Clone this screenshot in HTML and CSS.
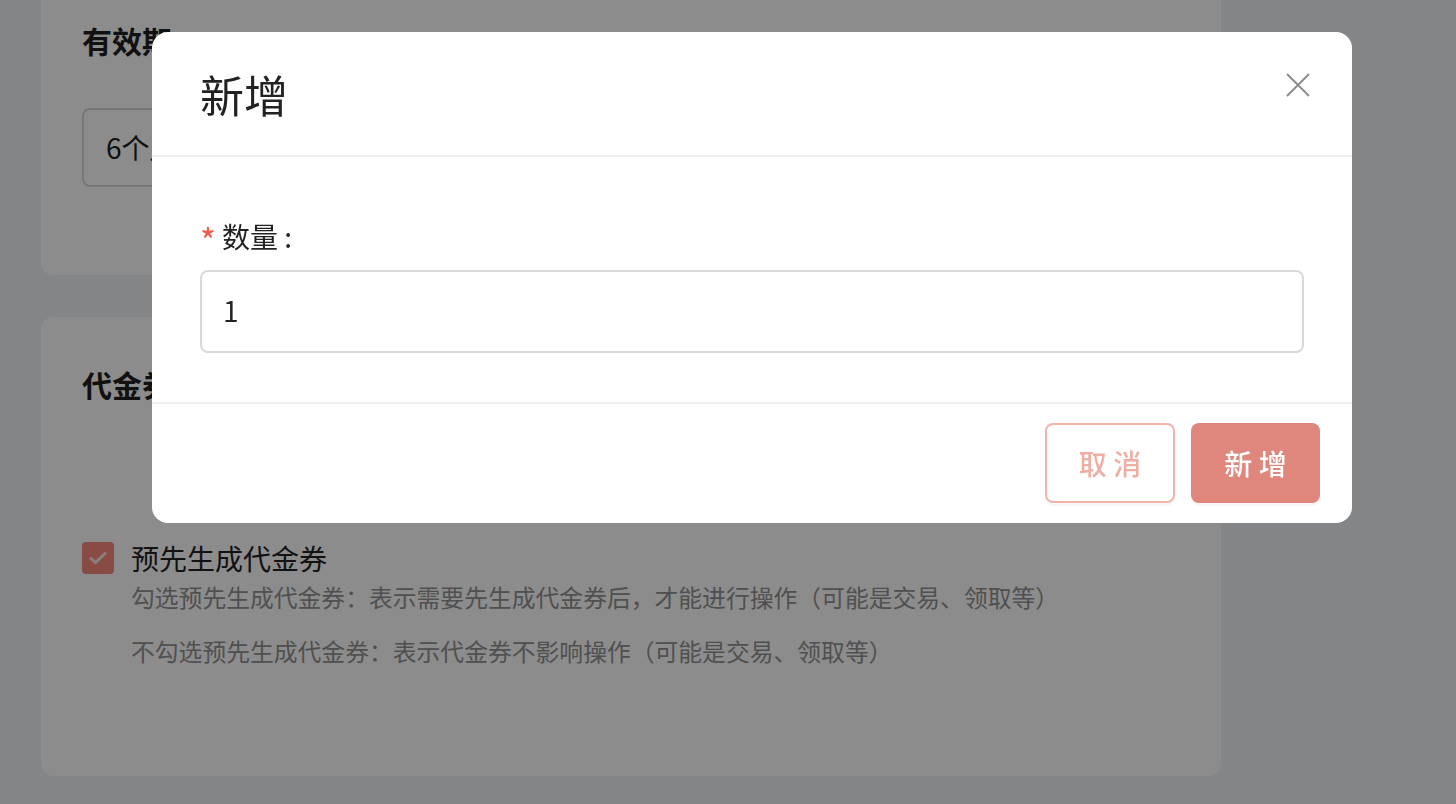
FILE: index.html
```html
<!DOCTYPE html>
<html lang="zh-CN">
<head>
    <meta charset="UTF-8">
    <meta name="viewport" content="width=device-width, initial-scale=1.0">
    <title>代金券设置</title>
    <link rel="stylesheet" href="styles.css">
</head>
<body>
    <div class="page">
        <div class="card card-validity">
            <h3 class="card-title">有效期</h3>
            <div class="select-box">6个月</div>
        </div>

        <div class="card card-voucher">
            <h3 class="card-title">代金券设置</h3>
            <label class="check-row">
                <span class="check-box">
                    <svg width="18" height="14" viewBox="0 0 18 14"><path d="M2 7.5l4.5 4.2L16 2.5" fill="none" stroke="#fff" stroke-width="3" stroke-linecap="round" stroke-linejoin="round"/></svg>
                </span>
                <span class="check-label">预先生成代金券</span>
            </label>
            <p class="hint">勾选预先生成代金券：表示需要先生成代金券后，才能进行操作（可能是交易、领取等）</p>
            <p class="hint">不勾选预先生成代金券：表示代金券不影响操作（可能是交易、领取等）</p>
        </div>
    </div>

    <div class="mask">
        <div class="modal">
            <div class="modal-header">
                <h2>新增</h2>
                <button class="close-btn" aria-label="关闭">
                    <svg width="24" height="24" viewBox="0 0 24 24"><path d="M1 1L23 23M23 1L1 23" stroke="#8c8c8c" stroke-width="2" fill="none"/></svg>
                </button>
            </div>
            <div class="modal-body">
                <div class="form-label"><span class="required">*</span>数量 :</div>
                <input class="form-input" type="text" value="1">
            </div>
            <div class="modal-footer">
                <button class="btn btn-cancel">取 消</button>
                <button class="btn btn-primary">新 增</button>
            </div>
        </div>
    </div>
</body>
</html>
```

FILE: styles.css
```css
* {
    box-sizing: border-box;
}

body {
    margin: 0;
    font-family: "PingFang SC", "Noto Sans CJK SC", sans-serif;
    background-color: #f0f2f5;
    color: #222;
    height: 804px;
    overflow: hidden;
}

.page {
    width: 1180px;
    margin-left: 41px;
}

.card {
    background-color: #fff;
    border-radius: 12px;
    padding: 41px;
}

.card-validity {
    margin-top: -14px;
    height: 289px;
}

.card-voucher {
    margin-top: 42px;
    height: 459px;
}

.card-title {
    margin: 0;
    font-size: 30px;
    font-weight: 700;
    line-height: 40px;
    color: #1f1f1f;
}

.card-validity .card-title {
    margin-top: -7px;
}

.select-box {
    margin-top: 48px;
    width: 560px;
    height: 79px;
    border: 2px solid #d9d9d9;
    border-radius: 8px;
    padding: 0 22px;
    font-size: 28px;
    line-height: 75px;
}

.card-voucher .card-title {
    margin-top: 6px;
}

.check-row {
    display: flex;
    align-items: center;
    margin-top: 138px;
}

.check-box {
    width: 32px;
    height: 32px;
    border-radius: 4px;
    background-color: #f98a7f;
    display: flex;
    align-items: center;
    justify-content: center;
    margin-right: 17px;
}

.check-box svg {
    opacity: 0.8;
}

.check-label {
    font-size: 28px;
    line-height: 32px;
}

.hint {
    margin: 6px 0 0 49px;
    font-size: 23.8px;
    line-height: 34px;
    color: #939393;
}

.hint + .hint {
    margin-top: 20px;
}

.mask {
    position: fixed;
    inset: 0;
    background-color: rgba(0, 0, 0, 0.45);
    padding: 32px 0 0 152px;
}

.modal {
    width: 1200px;
    background-color: #fff;
    border-radius: 16px;
    overflow: hidden;
}

.modal-header {
    height: 125px;
    padding: 0 40px 0 48px;
    display: flex;
    align-items: center;
    justify-content: space-between;
    border-bottom: 2px solid #efefef;
}

.modal-header h2 {
    margin: 0;
    font-size: 44px;
    font-weight: 400;
    color: #222;
}

.close-btn {
    background: none;
    border: none;
    padding: 0;
    width: 28px;
    height: 28px;
    display: flex;
    align-items: center;
    justify-content: center;
    cursor: pointer;
    margin-bottom: 18px;
}

.modal-body {
    padding: 62px 48px 49px;
}

.form-label {
    height: 34px;
    font-size: 28px;
    line-height: 34px;
    color: #222;
}

.required {
    color: #f5574a;
    margin-right: 6px;
    font-size: 34px;
    line-height: 20px;
    vertical-align: -6px;
}

.form-input {
    display: block;
    width: 100%;
    height: 83px;
    margin-top: 17px;
    border: 2px solid #d9d9d9;
    border-radius: 8px;
    padding: 0 21px 4px;
    font-family: inherit;
    font-size: 28px;
    color: #222;
    outline: none;
}

.modal-footer {
    border-top: 2px solid #efefef;
    padding: 19px 32px 20px;
    display: flex;
    justify-content: flex-end;
    gap: 16px;
}

.btn {
    width: 130px;
    height: 80px;
    border-radius: 8px;
    font-family: inherit;
    font-size: 28px;
    font-weight: 500;
    cursor: pointer;
    box-shadow: 0 3px 0 rgba(0, 0, 0, 0.03);
}

.btn-cancel {
    background-color: #fff;
    border: 2px solid #f2b4aa;
    color: #efaea4;
}

.btn-primary {
    background-color: #df877c;
    border: none;
    color: #fff;
    width: 129px;
}
```
